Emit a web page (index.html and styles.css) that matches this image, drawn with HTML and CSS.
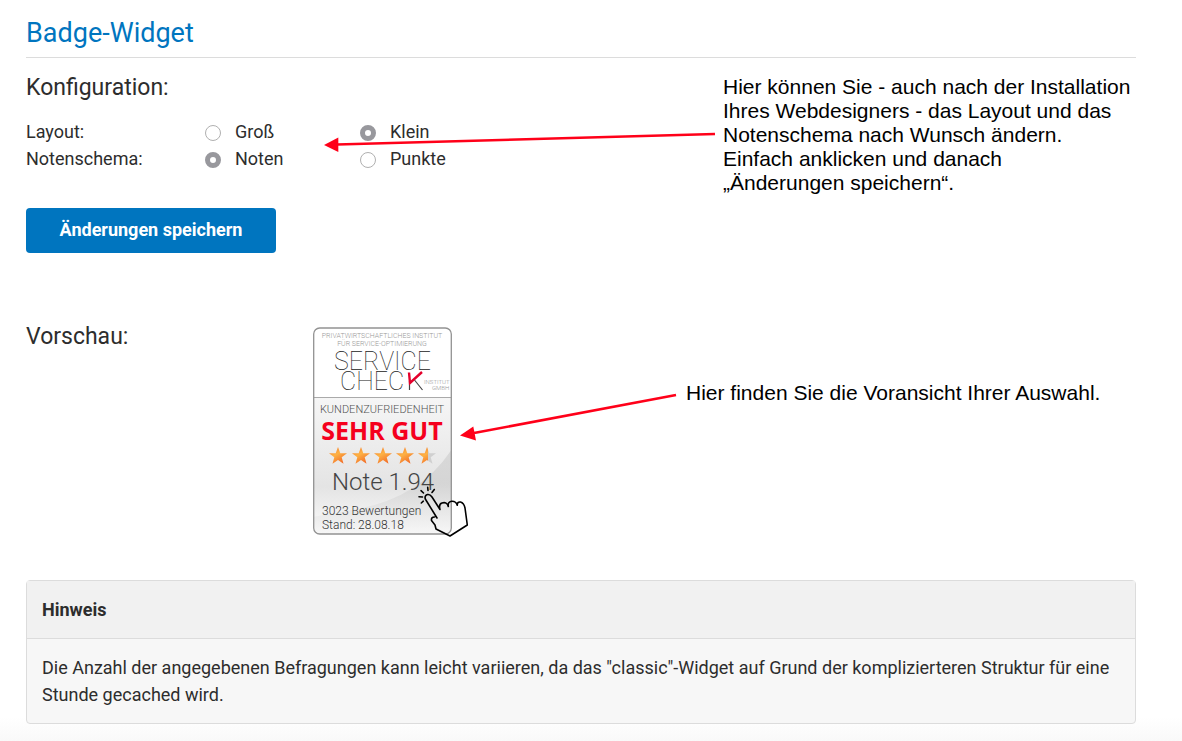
FILE: index.html
```html
<!DOCTYPE html>
<html lang="de">
<head>
<meta charset="utf-8">
<title>Badge-Widget</title>
<link rel="stylesheet" href="styles.css">
</head>
<body>
<main class="page">
  <h1 class="title">Badge-Widget</h1>

  <section class="config">
    <form class="config-form">
      <h2 class="heading">Konfiguration:</h2>
      <div class="options" role="radiogroup" aria-labelledby="layout-label">
        <span id="layout-label">Layout:</span>
        <label class="option"><input class="radio" type="radio" name="layout" value="gross">Groß</label>
        <label class="option"><input class="radio" type="radio" name="layout" value="klein" checked>Klein</label>
      </div>
      <div class="options" role="radiogroup" aria-labelledby="schema-label">
        <span id="schema-label">Notenschema:</span>
        <label class="option"><input class="radio" type="radio" name="schema" value="noten" checked>Noten</label>
        <label class="option"><input class="radio" type="radio" name="schema" value="punkte">Punkte</label>
      </div>
      <button class="save" type="button">Änderungen speichern</button>
    </form>
    <div class="note note-config">
      <svg class="arrow arrow-config" width="400" height="30" viewBox="0 0 400 30" aria-hidden="true">
        <path d="M14 20.5 392 10" stroke="#ff0019" stroke-width="2.6"/>
        <path d="M1 21 15.3 13.5V28Z" fill="#ff0019"/>
      </svg>
      <p class="note-text">Hier können Sie - auch nach der Installation<br>Ihres Webdesigners - das Layout und das<br>Notenschema nach Wunsch ändern.<br>Einfach anklicken und danach<br>„Änderungen speichern“.</p>
    </div>
  </section>

  <section class="preview">
    <h2 class="heading">Vorschau:</h2>
    <div class="badge">
      <svg class="badge-art" width="139" height="208" viewBox="0 0 139 208" role="img" aria-label="Service Check Institut, Kundenzufriedenheit: Sehr gut">
        <defs>
          <linearGradient id="panel" x1="0" y1="0" x2="0" y2="1">
            <stop offset="0" stop-color="#f6f6f6"/><stop offset=".65" stop-color="#e4e4e4"/><stop offset="1" stop-color="#fcfcfc"/>
          </linearGradient>
          <linearGradient id="sweep" x1="0" y1="0" x2="0" y2="1">
            <stop offset="0" stop-color="#d0d0d0"/><stop offset=".4" stop-color="#cfcfcf"/><stop offset="1" stop-color="#f6f6f6"/>
          </linearGradient>
          <linearGradient id="gold" x1="0" y1="0" x2=".6" y2="1">
            <stop offset="0" stop-color="#f4702a"/><stop offset=".5" stop-color="#fdb244"/><stop offset="1" stop-color="#f36f28"/>
          </linearGradient>
          <path id="star" fill="url(#gold)" d="M0-9 2.3-2.8 9-2.7 3.7 1.3 5.5 7.800 0 4-5.500 7.800-3.700 1.300-9-2.700-2.300-2.800Z"/>
          <clipPath id="frame"><rect x="1" y="1" width="137" height="206" rx="6"/></clipPath>
          <clipPath id="half"><rect x="-10" y="-10" width="11" height="20"/></clipPath>
        </defs>
        <g clip-path="url(#frame)">
          <rect width="139" height="208" fill="#fff"/>
          <rect y="70" width="139" height="138" fill="url(#panel)"/>
          <path d="M139 122Q108 170 45 182L0 190V208H139Z" fill="url(#sweep)" opacity=".7"/>
        </g>
        <path d="M1 70.500H138" stroke="#aaa"/>
        <rect x=".7" y="1" width="137.600" height="206" rx="6" fill="none" stroke="#929292" stroke-width="1.300"/>
        <g class="fine" text-anchor="middle">
          <text x="69" y="11">PRIVATWIRTSCHAFTLICHES INSTITUT</text>
          <text x="69" y="19">FÜR SERVICE-OPTIMIERUNG</text>
        </g>
        <g class="brand">
          <text x="21" y="43">SERVICE</text>
          <text x="27" y="63">CHEC</text>
        </g>
        <path d="M96.500 54V63M101.500 53 109.500 63" fill="none" stroke="#444" stroke-width="1.200"/>
        <path d="M96 45.500 97 56 109 45" fill="none" stroke="#e4002b" stroke-width="2.400"/>
        <g class="company"><text x="111" y="57">INSTITUT</text><text x="119" y="63">GMBH</text></g>
        <text class="category" x="69" y="86" text-anchor="middle">KUNDENZUFRIEDENHEIT</text>
        <text class="rating" x="69" y="113" text-anchor="middle">SEHR GUT</text>
        <use href="#star" x="25" y="129"/><use href="#star" x="48" y="129"/><use href="#star" x="70" y="129"/><use href="#star" x="92" y="129"/>
        <g transform="translate(114 129)">
          <path d="M0-9 2.300-2.800 9-2.700 3.700 1.300 5.500 7.800 0 4Z" fill="#d0d0d0"/>
          <use href="#star" clip-path="url(#half)"/>
        </g>
        <text class="grade" x="70" y="163" text-anchor="middle">Note 1.94</text>
        <g class="facts"><text x="9" y="188">3023 Bewertungen</text><text x="9" y="202">Stand: 28.08.18</text></g>
      </svg>
      <svg class="pointer" width="54" height="52" viewBox="0 0 54 52" fill="none" stroke="#000" stroke-width="1.600" stroke-linecap="round" stroke-linejoin="round" aria-hidden="true">
        <path d="M21 32 9.300 13Q8.300 9.500 11.500 8.500Q14 8 16 11L24 23.500Q22.500 18 26 17Q31 15.500 32.300 20.500Q31.500 16 35.500 15.300Q40 15 41.300 19.300Q41 15.500 44.500 16Q48 17 49 22L51.300 39 34 50 20 43 19 39 15.500 34.500Q15 31 18.500 31"/>
        <path d="M3 10.700 6.500 11M5 4.700 7.500 7M11.700 1.300 12 4.500M18.300 3.500 16 6.500M5.300 17 7.300 15.200"/>
      </svg>
    </div>
    <div class="note note-preview">
      <svg class="arrow arrow-preview" width="220" height="54" viewBox="0 0 220 54" aria-hidden="true">
        <path d="M14 41 216 3" stroke="#ff0019" stroke-width="2.600"/>
        <path d="M0 43.500 13.300 34.500 16 48.500Z" fill="#ff0019"/>
      </svg>
      <p class="note-text">Hier finden Sie die Voransicht Ihrer Auswahl.</p>
    </div>
  </section>

  <aside class="hint">
    <h3 class="hint-title">Hinweis</h3>
    <p class="hint-text">Die Anzahl der angegebenen Befragungen kann leicht variieren, da das "classic"-Widget auf Grund der komplizierteren Struktur für eine Stunde gecached wird.</p>
  </aside>
</main>
</body>
</html>
```
FILE: styles.css
```css
* { box-sizing: border-box; }
body {
  margin: 0;
  background: #fff;
  color: #2d2d2d;
  font: 18px/27px Roboto, sans-serif;
}
h1, h2, h3, p { margin: 0; }
.page { padding: 15px 46px 17px 26px; background: linear-gradient(to top, #f9f9f9, #fff 24px); }
.title {
  padding-bottom: 6px;
  border-bottom: 1px solid #dcdcdc;
  color: #0075bf;
  font-size: 27px;
  font-weight: 400;
  line-height: 36px;
}
.config { display: flex; justify-content: space-between; }
.config-form { padding-top: 14px; }
.heading { font-size: 23px; font-weight: 400; line-height: 32px; }
.config-form .heading { margin-bottom: 14px; }
.options { display: grid; grid-template-columns: 179px 155px 155px; }
.option { display: flex; align-items: center; gap: 14px; }
.radio {
  appearance: none;
  width: 16px;
  height: 16px;
  margin: 2px 0 0;
  border: 1px solid #b0b0b0;
  border-radius: 50%;
  background: #fff;
}
.radio:checked { border: 5px solid #98989d; }
.save {
  display: block;
  width: 250px;
  height: 45px;
  margin-top: 36px;
  padding: 0 0 2px;
  border: 0;
  border-radius: 4px;
  background: #0075bf;
  color: #fff;
  font: 700 18px/27px Roboto, sans-serif;
}
.note { position: relative; color: #000; font: 21px/24px "Liberation Sans", Arial, sans-serif; }
.note-config { width: 413px; padding-top: 17px; }
.arrow { position: absolute; right: 100%; }
.arrow-config { top: 66px; }
.arrow-preview { top: 11px; right: calc(100% + 6px); }
.preview { display: grid; grid-template-columns: 287px 373px 1fr; margin-top: 68px; }
.badge { position: relative; width: 139px; margin-top: 6px; }
.badge-art { display: block; }
.pointer { position: absolute; left: 103px; top: 159px; }
.note-preview { align-self: start; margin-top: 60px; }
.fine, .company, .brand, .category, .facts, .grade { font-family: Roboto, sans-serif; font-weight: 300; }
.fine { fill: #999; font-size: 7px; }
.company { fill: #999; font-size: 6px; }
.brand { fill: #222; font-size: 25px; font-weight: 100; }
.category { fill: #555; font-size: 11px; }
.rating { fill: #f5001d; font: 700 25px "Open Sans", sans-serif; }
.grade { fill: #444; font-size: 24px; }
.facts { fill: #333; font-size: 12px; }
.hint { margin-top: 45px; border: 1px solid #dcdcdc; border-radius: 4px; background: #f7f7f7; }
.hint-title { padding: 15px; border-bottom: 1px solid #dcdcdc; background: #f1f1f1; font-size: 18px; font-weight: 700; line-height: 27px; }
.hint-text { padding: 15px; }
```
